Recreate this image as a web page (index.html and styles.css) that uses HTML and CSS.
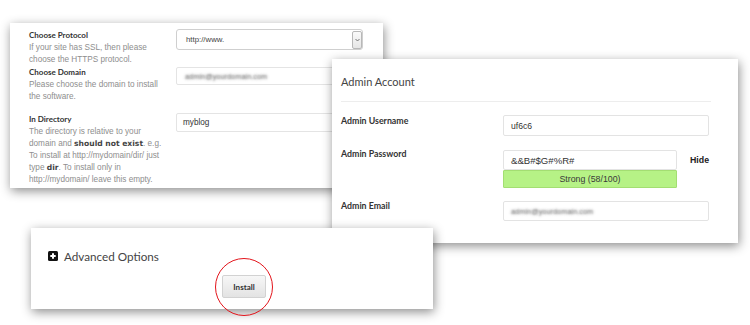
FILE: index.html
```html
<!DOCTYPE html>
<html lang="en">
<head>
  <meta charset="UTF-8">
  <meta name="viewport" content="width=device-width, initial-scale=1.0">
  <title>Install</title>
  <link rel="stylesheet" href="styles.css">
</head>
<body>
  <div class="stage">

    <!-- software settings -->
    <div class="card card-setup">
      <div class="field">
        <div class="field-info">
          <div class="field-label">Choose Protocol</div>
          <div class="field-desc">If your site has SSL, then please<br>choose the HTTPS protocol.</div>
        </div>
        <div class="select">
          <span>http://www.</span>
          <span class="select-arrow">
            <svg width="5" height="4" viewBox="0 0 5 4"><path d="M0.5 1 L2.5 3 L4.5 1" fill="none" stroke="#666" stroke-width="0.9"/></svg>
          </span>
        </div>
      </div>

      <div class="field">
        <div class="field-info">
          <div class="field-label">Choose Domain</div>
          <div class="field-desc">Please choose the domain to install<br>the software.</div>
        </div>
        <div class="input input-domain"><span class="blur">admin@yourdomain.com</span></div>
      </div>

      <div class="field field-dir">
        <div class="field-info">
          <div class="field-label">In Directory</div>
          <div class="field-desc">The directory is relative to your<br>domain and <b>should not exist</b>. e.g.<br>To install at http://mydomain/dir/ just<br>type <b>dir</b>. To install only in<br>http://mydomain/ leave this empty.</div>
        </div>
        <div class="input input-dir">myblog</div>
      </div>
    </div>

    <!-- admin account -->
    <div class="card card-admin">
      <div class="admin-title">Admin Account</div>

      <div class="admin-row">
        <div class="admin-label">Admin Username</div>
        <div class="admin-input">uf6c6</div>
      </div>

      <div class="admin-row admin-row-pass">
        <div class="admin-label">Admin Password</div>
        <div class="pass-wrap">
          <div class="pass-box">
            <div class="admin-input pass-input">&amp;&amp;B#$G#%R#</div>
            <div class="strength">Strong (58/100)</div>
          </div>
          <span class="hide-link">Hide</span>
        </div>
      </div>

      <div class="admin-row admin-row-mail">
        <div class="admin-label">Admin Email</div>
        <div class="admin-input"><span class="blur">admin@yourdomain.com</span></div>
      </div>
    </div>

    <!-- advanced options + install -->
    <div class="card card-advanced">
      <div class="adv-title">
        <svg class="adv-icon" width="10" height="10" viewBox="0 0 10 10">
          <rect x="0" y="0" width="10" height="10" rx="1.5" fill="#111"/>
          <path d="M5 2.3 V7.7 M2.3 5 H7.7" stroke="#fff" stroke-width="2"/>
        </svg>
        <span>Advanced Options</span>
      </div>
      <div class="install-row">
        <div class="install-wrap">
          <button class="install-btn">Install</button>
          <span class="ring"></span>
        </div>
      </div>
    </div>

  </div>
</body>
</html>
```

FILE: styles.css
```css
*{
  margin: 0;
  padding: 0;
  box-sizing: border-box;
}

body{
  background: #fff;
  font-family: "Liberation Sans", Arial, sans-serif;
  color: #333;
}

.stage{
  position: relative;
  width: 750px;
  height: 325px;
  overflow: hidden;
}

.card{
  position: absolute;
  background: #fff;
  box-shadow: 1px 3px 10px rgba(0, 0, 0, 0.45);
}

/* blurred e-mail placeholder */
.blur{
  display: inline-block;
  color: transparent;
  text-shadow: 0 0 2.5px rgba(60, 60, 60, 0.9);
}

/* ---------- setup card ---------- */

.card-setup{
  left: 10px;
  top: 23px;
  width: 373px;
  height: 165px;
  padding: 6px 20px 0 19px;
}

.field{
  display: grid;
  grid-template-columns: 147px 1fr;
  align-items: start;
}

.field-dir{
  margin-top: 10px;
}

.field-label{
  font-family: Lato, "Open Sans", sans-serif;
  font-weight: bold;
  font-size: 8px;
  line-height: 12px;
  color: #333;
  margin-bottom: 1px;
}

.field-desc{
  font-size: 8.2px;
  line-height: 12px;
  color: #8e8e8e;
}

.field-desc b{
  font-family: "DejaVu Sans", Verdana, sans-serif;
  font-size: 7.6px;
  color: #444;
}

.select{
  height: 21px;
  border: 1px solid #cfcfcf;
  border-radius: 3px;
  display: flex;
  align-items: center;
  justify-content: space-between;
  padding: 0 0 0 9px;
  font-size: 7.8px;
  color: #444;
}

.select-arrow{
  width: 10px;
  height: 18px;
  border: 1px solid #b8b8b8;
  border-radius: 2px;
  background: linear-gradient(#fafafa, #e6e6e6);
  display: flex;
  align-items: center;
  justify-content: center;
}

.input{
  border: 1px solid #e4e4e4;
  border-radius: 2px;
  display: flex;
  align-items: center;
  padding-left: 8px;
  font-size: 8.2px;
  color: #333;
}

.input-domain{
  height: 18px;
  margin-top: 1px;
}

.input-domain .blur{
  font-size: 7.4px;
}

.input-dir{
  height: 19px;
  padding-left: 6px;
}

/* ---------- admin card ---------- */

.card-admin{
  left: 332px;
  top: 59px;
  width: 406px;
  height: 184px;
  padding: 15px 27px 0 9px;
}

.admin-title{
  font-family: Lato, "Open Sans", sans-serif;
  font-size: 11px;
  line-height: 16px;
  color: #444;
  padding-bottom: 11px;
  border-bottom: 1px solid #ededed;
}

.admin-row{
  display: grid;
  grid-template-columns: 162px 1fr;
  align-items: start;
  margin-top: 13px;
}

.admin-row-pass{
  margin-top: 14px;
}

.admin-label{
  font-family: Lato, "Open Sans", sans-serif;
  font-weight: bold;
  font-size: 8.8px;
  line-height: 12px;
  color: #333;
}

.admin-row-pass .admin-label{
  margin-top: -2px;
}

.admin-row-mail .admin-label{
  margin-top: -1px;
}

.admin-input{
  width: 206px;
  height: 21px;
  border: 1px solid #e3e3e3;
  border-radius: 2px;
  display: flex;
  align-items: center;
  padding-left: 7px;
  font-size: 8.6px;
  color: #333;
}

.admin-row-mail .admin-input{
  height: 20px;
}

.admin-row-mail .blur{
  font-size: 7.4px;
}

.pass-wrap{
  display: flex;
  align-items: flex-start;
  gap: 13px;
}

.pass-box{
  width: 174px;
}

.pass-input{
  width: 174px;
  height: 20px;
  font-size: 9.6px;
}

.strength{
  height: 18px;
  background: #b6f286;
  border: 1px solid #a3de72;
  border-radius: 1px;
  font-size: 8.8px;
  line-height: 16px;
  text-align: center;
  color: #3a3a3a;
}

.hide-link{
  font-weight: bold;
  font-size: 8.8px;
  line-height: 12px;
  margin-top: 4px;
  color: #222;
}

/* ---------- advanced card ---------- */

.card-advanced{
  left: 31px;
  top: 228px;
  width: 402px;
  height: 81px;
  padding: 20px 0 0 17px;
}

.adv-title{
  display: flex;
  align-items: center;
  gap: 6px;
  font-family: Lato, "Open Sans", sans-serif;
  font-size: 11.7px;
  line-height: 16px;
  color: #444;
}

.install-row{
  margin-top: 11px;
  padding-left: 174px;
}

.install-wrap{
  position: relative;
  width: 44px;
  height: 23px;
}

.install-btn{
  width: 44px;
  height: 23px;
  border: 1px solid #d2d2d2;
  border-radius: 2px;
  background: linear-gradient(#f7f7f7, #e3e3e3);
  font-family: Lato, "Open Sans", sans-serif;
  font-weight: bold;
  font-size: 8px;
  color: #333;
}

.ring{
  position: absolute;
  left: -7px;
  top: -17px;
  width: 58px;
  height: 58px;
  border: 1.5px solid #e3141b;
  border-radius: 50%;
}
```
